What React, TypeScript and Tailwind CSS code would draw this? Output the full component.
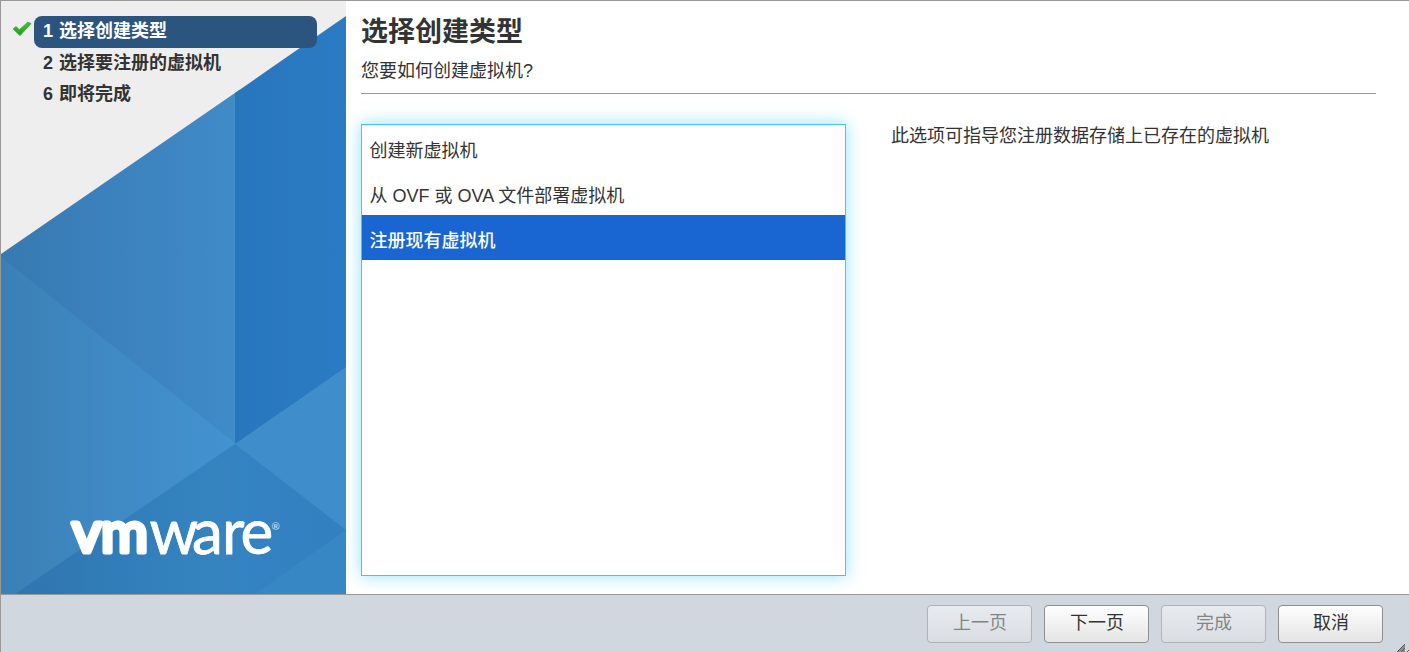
import { useState } from "react";
import clsx from "clsx";

const steps = [
  { id: 1, label: "选择创建类型" },
  { id: 2, label: "选择要注册的虚拟机" },
  { id: 6, label: "即将完成" },
];

const creationTypes = [
  "创建新虚拟机",
  "从 OVF 或 OVA 文件部署虚拟机",
  "注册现有虚拟机",
];

const buttons = [
  { label: "上一页", disabled: true },
  { label: "下一页", disabled: false },
  { label: "完成", disabled: true },
  { label: "取消", disabled: false },
];

const CheckIcon = () => (
  <svg width="20" height="16" viewBox="0 0 20 16">
    <defs>
      <linearGradient id="check" x1="0" y1="0" x2="0" y2="1">
        <stop offset="0" stopColor="#4cc038" />
        <stop offset="1" stopColor="#249a1c" />
      </linearGradient>
    </defs>
    <path
      d="M1.2 8 4 5.6 7.4 8.8 15.8 1.2 19 2.6 8 14.6Z"
      fill="url(#check)"
      stroke="#3aa92c"
      strokeWidth="0.9"
      strokeLinejoin="round"
    />
  </svg>
);

const SidebarArt = () => (
  <svg
    className="absolute inset-0"
    width="345"
    height="593"
    viewBox="1 1 345 593"
  >
    <defs>
      <linearGradient id="upper" gradientUnits="userSpaceOnUse" x1="1" y1="0" x2="235" y2="0">
        <stop offset="0" stopColor="#377ab0" />
        <stop offset="0.4" stopColor="#3b80bc" />
        <stop offset="1" stopColor="#3f8bc8" />
      </linearGradient>
      <linearGradient id="left" gradientUnits="userSpaceOnUse" x1="1" y1="0" x2="235" y2="0">
        <stop offset="0" stopColor="#3b80b4" />
        <stop offset="0.4" stopColor="#3f88c3" />
        <stop offset="1" stopColor="#4393d0" />
      </linearGradient>
      <linearGradient id="bottom" gradientUnits="userSpaceOnUse" x1="15" y1="0" x2="346" y2="0">
        <stop offset="0" stopColor="#3075ae" />
        <stop offset="0.35" stopColor="#317eba" />
        <stop offset="0.63" stopColor="#3584c0" />
        <stop offset="0.7" stopColor="#3382c2" />
        <stop offset="1" stopColor="#3380c1" />
      </linearGradient>
      <linearGradient id="deep" gradientUnits="userSpaceOnUse" x1="235" y1="0" x2="346" y2="0">
        <stop offset="0" stopColor="#2877bd" />
        <stop offset="1" stopColor="#2b7bc4" />
      </linearGradient>
    </defs>
    {/* facets overlap, each one covers the edge of the one before */}
    <path d="M1 254 240 89.6V450L1 270Z" fill="url(#upper)" />
    <path d="M235 93 346 16V380L235 450Z" fill="url(#deep)" />
    <path d="M1 257 236 444 20 600H1Z" fill="url(#left)" />
    <path d="M235 444 346 367V540Z" fill="#3f8dcb" />
    <path d="M235 444 346 530V594H15Z" fill="url(#bottom)" />
    <path d="M346 530V594H255Z" fill="#3787c5" />
    <text
      y="552"
      className="fill-white font-['Lato'] text-[62px]"
      strokeLinejoin="round"
    >
      <tspan x="72 101" className="stroke-white stroke-[5px] text-[57px]">
        vm
      </tspan>
      <tspan x="149.5 192 222 240.5" y="553.5" className="stroke-white stroke-[0.8px]">
        ware
      </tspan>
      <tspan x="271.5" y="530" className="fill-white/80 text-[10px]">
        ®
      </tspan>
    </text>
  </svg>
);

export default function App() {
  const [selected, setSelected] = useState(2);

  return (
    <div className="flex h-[652px] w-[1409px] flex-col overflow-hidden border-t border-l border-[#999] bg-white font-['Liberation_Sans','Noto_Sans_CJK_SC',sans-serif] text-[18px] text-[#333]">
      <div className="flex h-[593px]">
        {/* Wizard steps */}
        <aside className="relative h-[593px] w-[345px] shrink-0 bg-[#eee]">
          <SidebarArt />
          <ol className="relative pt-[15px] pl-[9px] font-bold">
            {steps.map((step, i) => (
              <li
                key={step.id}
                className={clsx("flex", i === 0 ? "h-8" : "h-[31px]")}
              >
                <span className="w-6 shrink-0 pt-[5px] pl-0.5">
                  {i === 0 && <CheckIcon />}
                </span>
                <span
                  className={clsx(
                    "flex w-[283px] gap-1.5 rounded-lg pl-[9px] leading-[30px]",
                    i === 0 && "bg-[#2b547f] text-white"
                  )}
                >
                  <span>{step.id}</span>
                  <span>{step.label}</span>
                </span>
              </li>
            ))}
          </ol>
        </aside>

        {/* Step content */}
        <main className="flex-1 pr-[33px] pl-[15px]">
          <header className="h-[93px] border-b border-[#999] pt-[11px]">
            <h1 className="text-[27px] leading-10 font-bold">选择创建类型</h1>
            <p className="pt-[6px] leading-[27px]">您要如何创建虚拟机?</p>
          </header>
          <div className="flex gap-[45px] pt-[30px]">
            <ul className="h-[452px] w-[485px] border border-[#3cc8f5] shadow-[0_0_15px_#29c7ff80]">
              {creationTypes.map((type, i) => (
                <li
                  key={type}
                  onClick={() => setSelected(i)}
                  className={clsx(
                    "h-[45px] cursor-default px-[7.5px] pt-1 leading-[45px]",
                    selected === i && "bg-[#1966d2] font-medium text-white"
                  )}
                >
                  {type}
                </li>
              ))}
            </ul>
            <p className="leading-[24px]">此选项可指导您注册数据存储上已存在的虚拟机</p>
          </div>
        </main>
      </div>

      <footer className="relative flex flex-1 justify-end gap-3 border-t border-[#999] bg-[#d0d7df] pt-[10px] pr-[26px]">
        {buttons.map((button) => (
          <button
            key={button.label}
            disabled={button.disabled}
            className="h-[38px] w-[105px] rounded border border-[#8f8f8f] bg-linear-to-b from-white to-[#e4e4e4] pb-px pl-px text-[#333] disabled:opacity-50"
          >
            {button.label}
          </button>
        ))}
        {/* Resize grip */}
        <svg className="absolute right-0 bottom-0" width="12" height="9" viewBox="0 0 12 9">
          <path d="M0 9 8 1V9Z" fill="#8b8f94" />
          <path d="M0 9 8 1M4 9 8 5M10 9 12 7" stroke="#555" />
        </svg>
      </footer>
    </div>
  );
}
